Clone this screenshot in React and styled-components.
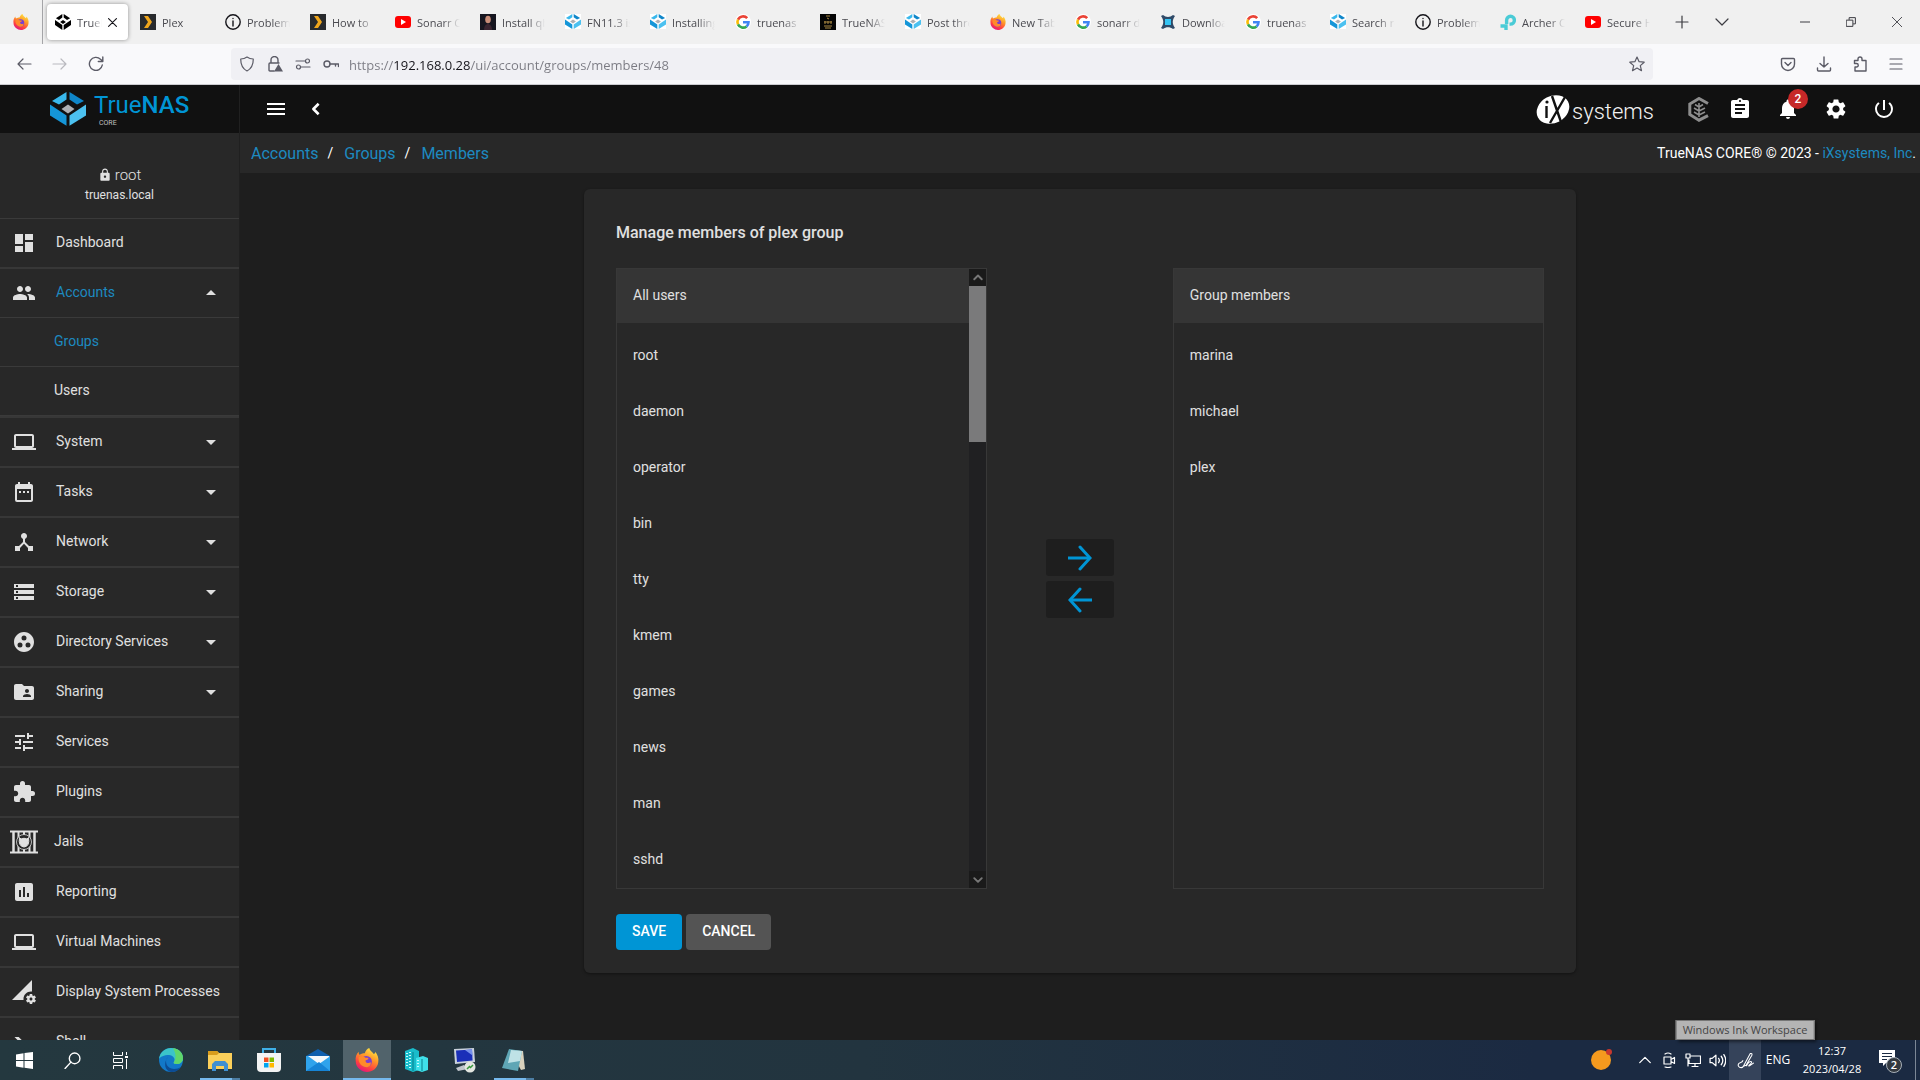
import React from "react";
import styled, { createGlobalStyle, css } from "styled-components";
import {
  MdDashboard, MdPeople, MdLaptop, MdDateRange, MdDeviceHub, MdStorage, MdGroupWork,
  MdFolderShared, MdTune, MdExtension, MdAssessment, MdPermDataSetting, MdMenu,
  MdAssignment, MdNotifications, MdSettings, MdPowerSettingsNew, MdLock,
  MdArrowDropDown, MdArrowDropUp,
} from "react-icons/md";

const ui = '"Open Sans", "Noto Sans", sans-serif';
const app = 'Roboto, "Liberation Sans", sans-serif';
const blue = "#0095d5";
const crumbBlue = "#1d8ac0";

const GlobalStyle = createGlobalStyle`
  * { box-sizing: border-box; }
  body { margin: 0; background: #1e1e1e; font-family: ${app}; overflow: hidden; }
  button { border: 0; padding: 0; background: none; color: inherit; font: inherit; cursor: pointer; }
  a { color: inherit; text-decoration: none; }
  ul { list-style: none; margin: 0; padding: 0; }
  svg { display: block; flex: none; }
`;

const Screen = styled.div`
  display: flex;
  flex-direction: column;
  height: 100vh;
`;

/* ---------- browser ---------- */

const TabStrip = styled.div`
  display: flex;
  align-items: center;
  height: 44px;
  background: #f0f0f0;
  color: #15141a;
  font: 11px ${ui};
`;
const PinnedTab = styled.button`
  display: flex;
  align-items: center;
  justify-content: center;
  width: 43px;
  height: 44px;
  border-right: 1px solid #a5a5a8;
`;
const Tabs = styled.div`
  display: flex;
  gap: 4px;
  padding: 0 4px;
`;
const Tab = styled.button`
  display: flex;
  align-items: center;
  gap: 6px;
  width: 81px;
  height: 36px;
  padding: 0 8px;
  border-radius: 4px;
  color: #4a4a50;
  ${(p) => p.$active && css`
    padding-right: 11px;
    background: #fff;
    box-shadow: 0 0 4px rgba(0, 0, 0, 0.4);
  `}
`;
const TabLabel = styled.span`
  flex: 1;
  overflow: hidden;
  text-align: left;
  white-space: nowrap;
  mask-image: linear-gradient(to right, #000 60%, transparent);
`;
const StripButton = styled.button`
  display: flex;
  align-items: center;
  justify-content: center;
  width: ${(p) => p.$w || 40}px;
  height: 44px;
  color: #3c3c42;
`;
const Spacer = styled.div`
  flex: 1;
`;
const NavBar = styled.div`
  display: flex;
  align-items: center;
  height: 41px;
  padding: 0 6px;
  background: #f9f9fb;
  border-bottom: 1px solid #ccccd0;
  color: #5b5b66;
`;
const NavButton = styled.button`
  display: flex;
  align-items: center;
  justify-content: center;
  width: 36px;
  height: 32px;
  opacity: ${(p) => (p.disabled ? 0.4 : 1)};
`;
const UrlBar = styled.form`
  display: flex;
  align-items: center;
  flex: 1;
  height: 32px;
  margin: 0 117px;
  padding: 0 2px;
  background: #f0f0f4;
  border-radius: 4px;
`;
const UrlIcon = styled.button`
  display: flex;
  align-items: center;
  justify-content: center;
  width: 28px;
  height: 28px;
`;
const UrlInput = styled.input`
  flex: 1;
  border: 0;
  padding: 2px 4px 0;
  outline: 0;
  font: 13px ${ui};
  color: transparent;
  background: linear-gradient(to right, #7a7a82 49px, #15141a 49px, #15141a 125px, #7a7a82 125px);
  background-clip: text;
`;

/* ---------- TrueNAS shell ---------- */

const Shell = styled.div`
  display: flex;
  flex: 1;
  min-height: 0;
  color: #e0e0e0;
`;
const Sidebar = styled.aside`
  display: flex;
  flex-direction: column;
  width: 240px;
  overflow: hidden;
  background: #282828;
  border-right: 1px solid #202020;
`;
const LogoBar = styled.a`
  display: flex;
  align-items: center;
  gap: 8px;
  flex: none;
  height: 48px;
  padding-left: 50px;
  background: #111;
`;
const Wordmark = styled.span`
  display: flex;
  flex-direction: column;
  color: ${blue};
  font-size: 24px;
  line-height: 28px;
  b { font-weight: 500; }
  small { color: #c0c0c0; font-size: 7px; line-height: 8px; padding-left: 5px; }
`;
const UserBox = styled.div`
  display: flex;
  flex-direction: column;
  align-items: center;
  gap: 4px;
  flex: none;
  height: 86px;
  padding-top: 33px;
  border-bottom: 1px solid #3a3a3a;
`;
const UserName = styled.div`
  display: flex;
  align-items: center;
  gap: 3px;
  font-size: 15px;
  font-weight: 300;
  line-height: 18px;
`;
const HostName = styled.div`
  font-size: 12px;
  line-height: 14px;
`;
const NavItem = styled.li`
  border-bottom: 2px solid #373737;
`;
const NavLink = styled.a`
  display: flex;
  align-items: center;
  height: 48px;
  padding: 0 16px 0 ${(p) => (p.$wide ? 10 : 12)}px;
  font-size: 14px;
  color: ${(p) => (p.$active ? crumbBlue : "#e0e0e0")};
  > svg { color: #e0e0e0; }
`;
const NavText = styled.span`
  flex: 1;
  padding: 0 0 2px ${(p) => (p.$wide ? 16 : 20)}px;
  white-space: nowrap;
`;
const SubItem = styled.li`
  border-top: 1px solid #3a3a3a;
  &:last-child { border-bottom: 1px solid #3a3a3a; }
`;
const SubLink = styled.a`
  display: block;
  padding-left: 54px;
  font-size: 14px;
  line-height: 47px;
  height: 48px;
  color: ${(p) => (p.$active ? crumbBlue : "#e0e0e0")};
`;
const Page = styled.div`
  display: flex;
  flex-direction: column;
  flex: 1;
  min-width: 0;
  background: #1e1e1e;
`;
const TopBar = styled.header`
  display: flex;
  align-items: center;
  height: 48px;
  padding: 0 12px 0 16px;
  background: #111;
  color: #fff;
`;
const TopButton = styled.button`
  position: relative;
  display: flex;
  align-items: center;
  justify-content: center;
  width: ${(p) => p.$w || 48}px;
  height: 48px;
`;
const Badge = styled.span`
  position: absolute;
  top: 4px;
  left: 24px;
  width: 20px;
  height: 20px;
  border-radius: 50%;
  background: #c62828;
  color: #fff;
  font-size: 12px;
  font-weight: 500;
  line-height: 20px;
  text-align: center;
`;
const IxLogo = styled.a`
  display: flex;
  align-items: center;
  gap: 2px;
  margin-right: 28px;
  color: #f4f4f4;
  font: 300 22px ${app};
  span { padding-top: 4px; }
`;
const Crumbs = styled.nav`
  display: flex;
  align-items: center;
  height: 40px;
  padding: 0 4px 0 11px;
  background: #282828;
  color: #fff;
  font-size: 16px;
  a { color: ${crumbBlue}; }
`;
const Slash = styled.span`
  padding: 0 11px 0 9px;
  font-size: 14px;
`;
const Copyright = styled.span`
  margin-left: auto;
  font-size: 14px;
`;
const Content = styled.main`
  flex: 1;
  min-height: 0;
  padding: 16px;
`;
const Card = styled.section`
  max-width: 992px;
  margin: 0 auto;
  padding: 32px 32px 23px;
  border-radius: 6px;
  background: #282828;
  box-shadow: 0 1px 3px rgba(0, 0, 0, 0.4);
`;
const Title = styled.h1`
  margin: 0 0 24px;
  font-size: 16px;
  font-weight: 500;
  line-height: 23px;
`;
const DualList = styled.div`
  display: flex;
  height: 621px;
`;
const ListBox = styled.div`
  display: flex;
  width: 40%;
  border: 1px solid #383838;
`;
const ListBody = styled.div`
  flex: 1;
  overflow: hidden;
`;
const ListHeader = styled.h2`
  margin: 0 0 5px;
  padding-left: 16px;
  background: #353535;
  font-size: 14px;
  font-weight: 400;
  line-height: 52px;
  height: 54px;
`;
const User = styled.li`
  padding-left: 16px;
  font-size: 14px;
  line-height: 55px;
  height: 56px;
`;
const ScrollBar = styled.div`
  display: flex;
  flex-direction: column;
  width: 17px;
  background: #202022;
`;
const ScrollButton = styled.button`
  display: flex;
  align-items: center;
  justify-content: center;
  height: 17px;
  background: #1a1a1a;
`;
const ScrollTrack = styled.div`
  flex: 1;
`;
const Thumb = styled.div`
  height: 156px;
  background: #7a7a7b;
`;
const Movers = styled.div`
  display: flex;
  flex-direction: column;
  align-items: center;
  justify-content: center;
  gap: 5px;
  flex: 1;
`;
const MoveButton = styled.button`
  display: flex;
  align-items: center;
  justify-content: center;
  width: 68px;
  height: 37px;
  border-radius: 3px;
  background: #1e1e1e;
  color: ${blue};
`;
const Actions = styled.div`
  display: flex;
  gap: 4px;
  margin-top: 25px;
`;
const ActionButton = styled.button`
  height: 36px;
  padding: 0 16px 2px;
  border-radius: 4px;
  font-size: 14px;
  font-weight: 500;
  color: #fff;
  background: ${(p) => (p.$primary ? blue : "#545454")};
`;

/* ---------- taskbar ---------- */

const TaskBar = styled.footer`
  display: flex;
  height: 40px;
  background: linear-gradient(to right, #24383f, #22343f 45%, #1b2a42 80%);
  color: #fff;
  font: 12px ${ui};
`;
const SystemButtons = styled.div`
  display: flex;
  margin-right: 3px;
`;
const Pinned = styled.div`
  display: flex;
  gap: 1px;
`;
const TaskButton = styled.button`
  position: relative;
  display: flex;
  align-items: center;
  justify-content: center;
  width: 48px;
  height: 40px;
  background: ${(p) => (p.$active ? "#51636b" : "none")};
`;
const Underline = styled.span`
  position: absolute;
  left: ${(p) => (p.$full ? 0 : 4)}px;
  right: ${(p) => (p.$full ? 0 : 4)}px;
  bottom: 0;
  height: 2px;
  background: ${(p) => (p.$full ? "#76b9ed" : "linear-gradient(to right, #76b9ed 32px, #4d7ea3 32px)")};
`;
const Tray = styled.div`
  display: flex;
  margin-left: auto;
  padding-right: 4px;
`;
const TrayItem = styled.button`
  position: relative;
  display: flex;
  align-items: center;
  justify-content: center;
  width: ${(p) => p.$w || 24}px;
  height: 40px;
  background: ${(p) => (p.$hover ? "#35435a" : "none")};
  line-height: 18px;
  font-size: ${(p) => (p.$small ? 11 : 12)}px;
`;
const DesktopEdge = styled.div`
  width: 1px;
  background: #7c8796;
`;
const Tooltip = styled.span`
  position: absolute;
  bottom: 40px;
  left: 50%;
  transform: translateX(-50%);
  padding: 0 6px;
  border: 1px solid #767676;
  background: #b4b4b4;
  color: #454545;
  font-size: 11px;
  line-height: 18px;
  white-space: nowrap;
  box-shadow: 2px 2px 3px rgba(0, 0, 0, 0.5);
`;

/* ---------- drawings ---------- */

const Line = ({ size = 16, w = 1.2, children, ...rest }) => (
  <svg width={size} height={size} viewBox="0 0 16 16" fill="none" stroke="currentColor" strokeWidth={w}
    strokeLinecap="round" strokeLinejoin="round" aria-hidden="true" {...rest}>{children}</svg>
);

const Firefox = ({ size = 16 }) => {
  const id = React.useId();
  return (
    <svg width={size} height={size} viewBox="0 0 32 32" aria-hidden="true">
      <defs>
        <linearGradient id={id} x1="0.8" y1="0" x2="0.3" y2="1">
          <stop offset="0" stopColor="#fff04a" /><stop offset="0.4" stopColor="#ff9a28" />
          <stop offset="0.75" stopColor="#ff4040" /><stop offset="1" stopColor="#e01480" />
        </linearGradient>
      </defs>
      <path fill={`url(#${id})`} d="M19 0c1 4 4 5 6 8 2-1 2-2 2-3 3 4 5 8 4 14-1 8-8 13-15 13S1 26 1 18C0 12 2 8 5 5c0 2 0 3 1 4 3-2 5-2 7-2 1-3 3-6 6-7z" />
      <circle cx="15" cy="18" r="7.5" fill="#7a3fd0" />
      <path fill="#ff8a2a" d="M5 12c4-2 7-1 9 1 2 0 4 0 4 1-1 2-4 2-4 3 0 3 4 4 7 2 1 5-4 8-9 6-5-2-8-7-7-13z" />
    </svg>
  );
};
const Cube = ({ size = 16, mono, white }) => (
  <svg width={size} height={size * (mono ? 1 : 0.94)} viewBox="0 0 36 34" preserveAspectRatio="none" aria-hidden="true">
    {white && <rect width="36" height="34" fill="#fff" />}
    <path fill={mono ? "#000" : "#39b8ec"} d="M16.500 0v7.500L9 12.500 2 9z" />
    <path fill={mono ? "#000" : "#0f86c9"} d="M19.500 0v7.500l7.500 5L34 9z" />
    <path fill={mono ? "#000" : "#1596d8"} d="M0 12.500l16.500 11V34L0 23.500z" />
    <path fill={mono ? "#000" : "#4cc1f0"} d="M36 12.500l-16.500 11V34L36 23.500z" />
    <path fill={mono ? "#000" : "#aeb0b4"} d="M18 12.500l6.500 4.500-6.500 4.500-6.500-4.500z" />
  </svg>
);
const Plex = () => (
  <svg width="16" height="16" viewBox="0 0 16 16" aria-hidden="true">
    <rect width="16" height="16" fill="#282a2d" /><path fill="#f0a61c" d="M4 2h4l4 6-4 6H4l4-6z" />
  </svg>
);
const Info = () => <Line w="1.4" stroke="#15141a"><circle cx="8" cy="8" r="7.2" /><path d="M8 7v5M8 4.4v.2" /></Line>;
const YouTube = () => (
  <svg width="16" height="16" viewBox="0 0 16 16" aria-hidden="true">
    <rect y="2" width="16" height="12" rx="3" fill="#f00" /><path d="M6 5l5 3-5 3z" fill="#fff" />
  </svg>
);
const Portrait = () => (
  <svg width="16" height="16" viewBox="0 0 16 16" aria-hidden="true">
    <rect width="16" height="16" fill="#16151f" /><ellipse cx="8" cy="5.5" rx="2.8" ry="3.8" fill="#c98d78" />
    <path d="M4 16c0-4 2-6 4-6s4 2 4 6z" fill="#3a2430" />
  </svg>
);
const Google = () => (
  <svg width="16" height="16" viewBox="0 0 16 16" fill="none" strokeWidth="2.6" aria-hidden="true">
    <circle cx="8" cy="8" r="8" fill="#fff" />
    <path stroke="#ea4335" d="M12.2 4.2A5.6 5.6 0 0 0 3 5.6" /><path stroke="#fbbc05" d="M3 5.6a5.6 5.6 0 0 0 0 4.8" />
    <path stroke="#34a853" d="M3 10.4a5.6 5.6 0 0 0 8.6 2" /><path stroke="#4285f4" d="M11.6 12.4A5.6 5.6 0 0 0 13.5 8.2H8" />
  </svg>
);
const Badger = () => (
  <svg width="16" height="16" viewBox="0 0 16 16" aria-hidden="true">
    <rect width="16" height="16" fill="#050505" />
    <path d="M6 2h4M7 4l2 1M4 8h8M5 7v3m3-3v3m3-3v3M4 12h8M5 14h6" stroke="#a88743" fill="none" />
  </svg>
);
const Sonarr = () => (
  <svg width="16" height="16" viewBox="0 0 16 16" fill="none" aria-hidden="true">
    <path d="M1 2l2-1c3 2.500 7 2.500 10 0l2 1c-3 4-3 8 0 12l-2 1c-3-2.500-7-2.500-10 0l-2-1c3-4 3-8 0-12z" fill="#2f4a68" />
    <rect x="5" y="5" width="6" height="6" fill="#35c5f4" />
  </svg>
);
const TpLink = () => (
  <svg width="16" height="16" viewBox="0 0 16 16" fill="none" stroke="#4acbd6" strokeWidth="3.4" aria-hidden="true">
    <path d="M6.6 10V6.200a3.900 3.900 0 1 1 3.900 3.900H9.500M6 16v-4H.5" />
  </svg>
);
const JailIcon = () => (
  <svg width="28" height="24" viewBox="0 0 28 24" fill="none" stroke="#e0e0e0" aria-hidden="true">
    <path d="M0 1.500h28M0 22.500h28" strokeWidth="2" /><path d="M3.500 2v20M24.500 2v20" strokeWidth="2.500" />
    <path d="M8.500 2v20M19.500 2v20M14 2v20" strokeWidth="2" /><circle cx="14" cy="12" r="7.500" fill="#282828" strokeWidth="0.800" />
    <path d="M9.500 7.500l1.500 1.500q3-1.500 6 0l1.500-1.500q1.500 9-4.500 9.500-6-.500-4.500-9.500z" fill="#e0e0e0" />
  </svg>
);
const Prompt = () => (
  <svg width="24" height="24" viewBox="0 0 24 24" aria-hidden="true">
    <path fill="currentColor" d="M13 19v-3h8v3zM8.500 13L2.500 7h4.200l5.600 5.600-5.600 5.600H2.500z" />
  </svg>
);
const IxMark = () => (
  <svg width="34" height="31" viewBox="0 0 34 31" aria-hidden="true">
    <ellipse cx="17" cy="15.500" rx="17" ry="13.500" transform="rotate(-28 17 15.500)" fill="#fff" />
    <path d="M10.500 12v12M16 2l9 26M29 3L14 29" stroke="#111" strokeWidth="2.400" /><circle cx="11" cy="8" r="1.600" fill="#111" />
  </svg>
);
const Hex = () => (
  <svg width="22" height="25" viewBox="0 0 22 25" fill="none" stroke="#8d8d8d" aria-hidden="true">
    <path d="M20 6.500L11 1.500 1.800 7v10.500L11 23.200l9-4.500" strokeWidth="3" />
    <path d="M11 6v14M11 10L7 7.500M11 10l4-2.500M11 14l-5-3M11 14l6-3M11 18l-5-3M11 18l6-3" strokeWidth="1.600" />
  </svg>
);
const Arrow = ({ left }) => (
  <svg width="24" height="26" viewBox="0 0 24 26" fill="none" stroke="currentColor" strokeWidth="3" aria-hidden="true">
    {left
      ? <><path d="M24 13H2" /><path d="M12 2L2 13l10 11" strokeLinecap="round" /></>
      : <><path d="M0 13h22" /><path d="M12 2l10 11-10 11" strokeLinecap="round" /></>}
  </svg>
);
const Windows = () => (
  <svg width="17" height="17" viewBox="0 0 17 17" fill="#fff" aria-hidden="true">
    <path d="M0 2.400L7.500 1.300V8H0zM8.500 1.100L17 0v8H8.500zM0 9h7.500v6.700L0 14.600zM8.500 9H17v8l-8.500-1.200z" />
  </svg>
);
const TaskView = () => (
  <svg width="17" height="17" viewBox="0 0 17 17" fill="none" stroke="#fff" aria-hidden="true">
    <path d="M1.500 0v3.500h9V0M1.500 17v-3.500h9V17M1.500 6.500h9v4h-9zM14.500 0v3M14.500 7v10" /><path d="M13 5h3" strokeWidth="2" />
  </svg>
);
const Edge = () => (
  <svg width="24" height="24" viewBox="0 0 24 24" aria-hidden="true">
    <circle cx="12" cy="12" r="12" fill="#1278c8" />
    <path d="M0 11C1 4 6 0 12 0c7 0 12 4 12 10 0 4-3 6-6 6-3 0-4-1-3-2 2-3-1-7-5-7C5 7 1 9 0 11z" fill="#3bc4c9" />
    <path d="M14 0c6 1 10 5 10 10 0 4-3 6-6 6-3 0-4-1-3-2 3-5 1-10-1-14z" fill="#5fd66b" />
    <path d="M9 9c-4 3-2 12 6 12 3 0 5-1 7-2-3 4-6 5-10 5C6 23 4 15 9 9z" fill="#0c4c94" />
  </svg>
);
const Explorer = () => (
  <svg width="24" height="22" viewBox="0 0 24 22" aria-hidden="true">
    <path d="M0 2h9l2 2h13v16H0z" fill="#fbd05a" /><path d="M0 2h9l2 2-2 2H0z" fill="#d99d1c" />
    <path d="M4 22v-7l3-3h10l3 3v7h-4v-5H8v5z" fill="#3f8fd0" />
  </svg>
);
const Store = () => (
  <svg width="24" height="24" viewBox="0 0 24 24" aria-hidden="true">
    <path d="M6 6V1h12v5" fill="none" stroke="#3fb0e8" strokeWidth="2" /><path d="M0 5h24v15q0 4-4 4H4q-4 0-4-4z" fill="#f3f3f3" />
    <path fill="#f05022" d="M7 9.500h4.500V14H7z" /><path fill="#7fba00" d="M12.500 9.500H17V14h-4.500z" />
    <path fill="#00a4ef" d="M7 15h4.500v4.500H7z" /><path fill="#ffb900" d="M12.500 15H17v4.500h-4.500z" />
  </svg>
);
const Mail = () => (
  <svg width="24" height="22" viewBox="0 0 24 22" aria-hidden="true">
    <path d="M0 7l12-7 12 7v15H0z" fill="#0f5fae" /><path d="M0 7h24v15H0z" fill="#2fa3ec" />
    <path d="M2 7h21v1L13 15z" fill="#f4f8fb" /><path d="M0 22L13 13l11 9z" fill="#1684d6" />
  </svg>
);
const Servers = () => (
  <svg width="24" height="24" viewBox="0 0 24 24" aria-hidden="true">
    <path d="M1 3l8-3 6 3v19l-6 2-8-3z" fill="#19bccb" /><path d="M12 10l7-2 5 2v12l-6 2-6-2z" fill="#3fe0ea" />
    <path d="M3 5v15M6 4v17M14 12v9" stroke="#c9fbff" strokeWidth="2" strokeDasharray="1 2" /><path d="M9 4v19M18 11v12" stroke="#087f8c" />
  </svg>
);
const Remote = () => (
  <svg width="24" height="25" viewBox="0 0 24 25" aria-hidden="true">
    <path d="M1 1l20-1 1 14-20 2z" fill="#c9d1dc" /><path d="M3 2.500l16-1 .600 11-15.600 1.500z" fill="#1a2fb8" />
    <path d="M12 2l7-.500.600 6z" fill="#7590ec" /><path d="M3 20l8-3 4 4-10 2z" fill="#c0c5cc" />
    <circle cx="17" cy="19" r="5.500" fill="#e3e6e0" /><path d="M14 21l3-3M17 20l3-3" stroke="#38983c" strokeWidth="1.500" />
  </svg>
);
const Notepad = () => (
  <svg width="24" height="22" viewBox="0 0 24 22" aria-hidden="true">
    <path d="M8 1l13 1 2 18-4 1z" fill="#d9d2bd" /><path d="M7 0l13 2-4 20-16-3z" fill="#5fa6b5" /><path d="M9 1l11 1-2 10-12 2z" fill="#bfe2e6" />
  </svg>
);

/* ---------- data ---------- */

const tabs = [
  ["TrueN", <Cube mono />], ["Plex", <Plex />], ["Problem", <Info />], ["How to", <Plex />],
  ["Sonarr C", <YouTube />], ["Install qb", <Portrait />], ["FN11.3 iss", <Cube white />], ["Installing", <Cube white />],
  ["truenas", <Google />], ["TrueNAS", <Badger />], ["Post thre", <Cube white />], ["New Tab", <Firefox />],
  ["sonarr do", <Google />], ["Downloa", <Sonarr />], ["truenas", <Google />], ["Search re", <Cube white />],
  ["Problem", <Info />], ["Archer C", <TpLink />], ["Secure H", <YouTube />],
];
const nav = [
  { label: "Dashboard", icon: <MdDashboard size={24} /> },
  { label: "Accounts", icon: <MdPeople size={24} />, active: true, children: ["Groups", "Users"] },
  { label: "System", icon: <MdLaptop size={24} />, menu: true },
  { label: "Tasks", icon: <MdDateRange size={24} />, menu: true },
  { label: "Network", icon: <MdDeviceHub size={24} />, menu: true },
  { label: "Storage", icon: <MdStorage size={24} />, menu: true },
  { label: "Directory Services", icon: <MdGroupWork size={24} />, menu: true },
  { label: "Sharing", icon: <MdFolderShared size={24} />, menu: true },
  { label: "Services", icon: <MdTune size={24} /> },
  { label: "Plugins", icon: <MdExtension size={24} /> },
  { label: "Jails", icon: <JailIcon />, wide: true },
  { label: "Reporting", icon: <MdAssessment size={24} /> },
  { label: "Virtual Machines", icon: <MdLaptop size={24} /> },
  { label: "Display System Processes", icon: <MdPermDataSetting size={24} /> },
  { label: "Shell", icon: <Prompt /> },
];
const allUsers = ["root", "daemon", "operator", "bin", "tty", "kmem", "games", "news", "man", "sshd"];
const members = ["marina", "michael", "plex"];

const Browser = () => (
  <>
    <TabStrip>
      <PinnedTab aria-label="Firefox"><Firefox /></PinnedTab>
      <Tabs>
        {tabs.map(([label, icon], i) => (
          <Tab key={i} $active={i === 0}>
            {icon}
            <TabLabel>{label}</TabLabel>
            {i === 0 && <Line size={9} w="2" stroke="#15141a"><path d="M1 1l14 14M15 1L1 15" /></Line>}
          </Tab>
        ))}
      </Tabs>
      <StripButton aria-label="New tab"><Line><path d="M8 2v12M2 8h12" /></Line></StripButton>
      <StripButton aria-label="List tabs"><Line><path d="M2 5l6 6 6-6" /></Line></StripButton>
      <Spacer />
      <StripButton $w={46} aria-label="Minimize"><Line size={10} w="1.6"><path d="M0 8h16" /></Line></StripButton>
      <StripButton $w={46} aria-label="Restore"><Line size={10} w="1.6"><path d="M1 5h10v10H1zM5 4V1h10v10h-3" /></Line></StripButton>
      <StripButton $w={46} aria-label="Close"><Line size={10} w="1.400"><path d="M0 0l16 16M16 0L0 16" /></Line></StripButton>
    </TabStrip>
    <NavBar>
      <NavButton aria-label="Back"><Line><path d="M15 8H2M7 3L2 8l5 5" /></Line></NavButton>
      <NavButton aria-label="Forward" disabled><Line><path d="M1 8h13M9 3l5 5-5 5" /></Line></NavButton>
      <NavButton aria-label="Reload"><Line w="1.400"><path d="M14.300 9A6.500 6.500 0 1 1 12.500 3.300L14.500 5M14.800 1v4.500h-4.500" /></Line></NavButton>
      <UrlBar>
        <UrlIcon type="button" aria-label="Tracking protection"><Line><path d="M8 1c2 1.500 4 2 6.300 2 0 6-1.500 9.500-6.300 12C3.200 12.500 1.700 9 1.700 3 4 3 6 2.500 8 1z" /></Line></UrlIcon>
        <UrlIcon type="button" aria-label="Connection not secure">
          <Line w="1.400"><path d="M7 15H3q-1 0-1-1V8q0-1 1-1h9M4 7V4a3.500 3.500 0 0 1 7 0v3" /><path d="M11.500 8L16 15.500H7z" fill="currentColor" stroke="none" /></Line>
        </UrlIcon>
        <UrlIcon type="button" aria-label="Permissions"><Line><circle cx="12.500" cy="5" r="2" /><path d="M1 5h9M6 11h9" /><circle cx="3.500" cy="11" r="2" /></Line></UrlIcon>
        <UrlIcon type="button" aria-label="Saved login"><Line w="1.400"><circle cx="4" cy="8" r="3" /><path d="M7 8h8.500v2.500M12.500 8v2" /></Line></UrlIcon>
        <UrlInput aria-label="Address" defaultValue="https://192.168.0.28/ui/account/groups/members/48" />
        <UrlIcon type="button" aria-label="Bookmark"><Line><path d="M8 1l2.100 4.700 5.100.500-3.900 3.400 1.200 5.100L8 12l-4.500 2.700 1.200-5.100L.800 6.200l5.100-.500z" /></Line></UrlIcon>
      </UrlBar>
      <NavButton aria-label="Pocket"><Line w="1.400"><path d="M2.500 2.500h11q1 0 1 1V8a6.500 6.500 0 0 1-13 0V3.500q0-1 1-1zM5 6.500l3 3 3-3" /></Line></NavButton>
      <NavButton aria-label="Downloads"><Line w="1.400"><path d="M8 1v10M4 7.500L8 11l4-3.500M1.500 12v2q0 1 1 1h11q1 0 1-1v-2" /></Line></NavButton>
      <NavButton aria-label="Extensions"><Line w="1.400"><path d="M6 4.500V3a2 2 0 0 1 4 0v1.500h4V15H3v-4h1.500a1.700 1.700 0 0 0 0-3.500H2.500v-3z" /></Line></NavButton>
      <NavButton aria-label="Menu"><Line><path d="M2 3h12M2 8h12M2 13h12" /></Line></NavButton>
    </NavBar>
  </>
);

const SideNav = () => (
  <Sidebar>
    <LogoBar href="#">
      <Cube size={36} />
      <Wordmark><span>True<b>NAS</b></span><small>CORE</small></Wordmark>
    </LogoBar>
    <UserBox>
      <UserName><MdLock size={14} />root</UserName>
      <HostName>truenas.local</HostName>
    </UserBox>
    <ul>
      {nav.map((n) => (
        <NavItem key={n.label}>
          <NavLink href="#" $active={n.active} $wide={n.wide}>
            {n.icon}
            <NavText $wide={n.wide}>{n.label}</NavText>
            {n.menu && <MdArrowDropDown size={24} />}
            {n.children && <MdArrowDropUp size={24} />}
          </NavLink>
          {n.children && (
            <ul>
              {n.children.map((c, i) => <SubItem key={c}><SubLink href="#" $active={i === 0}>{c}</SubLink></SubItem>)}
            </ul>
          )}
        </NavItem>
      ))}
    </ul>
  </Sidebar>
);

const Members = () => (
  <Card>
    <Title>Manage members of plex group</Title>
    <DualList>
      <ListBox>
        <ListBody>
          <ListHeader>All users</ListHeader>
          <ul>{allUsers.map((u) => <User key={u}>{u}</User>)}</ul>
        </ListBody>
        <ScrollBar>
          <ScrollButton aria-label="Scroll up"><Line size={10} w="3" stroke="#777"><path d="M2 10l6-6 6 6" /></Line></ScrollButton>
          <ScrollTrack><Thumb /></ScrollTrack>
          <ScrollButton aria-label="Scroll down"><Line size={10} w="3" stroke="#777"><path d="M2 5l6 6 6-6" /></Line></ScrollButton>
        </ScrollBar>
      </ListBox>
      <Movers>
        <MoveButton aria-label="Add to group"><Arrow /></MoveButton>
        <MoveButton aria-label="Remove from group"><Arrow left /></MoveButton>
      </Movers>
      <ListBox>
        <ListBody>
          <ListHeader>Group members</ListHeader>
          <ul>{members.map((u) => <User key={u}>{u}</User>)}</ul>
        </ListBody>
      </ListBox>
    </DualList>
    <Actions>
      <ActionButton $primary>SAVE</ActionButton>
      <ActionButton>CANCEL</ActionButton>
    </Actions>
  </Card>
);

const WindowsBar = () => (
  <TaskBar>
    <SystemButtons>
      <TaskButton aria-label="Start"><Windows /></TaskButton>
      <TaskButton aria-label="Search"><Line size={17} w="1.300"><circle cx="10" cy="6" r="5" /><path d="M6.500 9.500L1 15.500" /></Line></TaskButton>
      <TaskButton aria-label="Task view"><TaskView /></TaskButton>
    </SystemButtons>
    <Pinned>
      <TaskButton aria-label="Edge"><Edge /></TaskButton>
      <TaskButton aria-label="File Explorer"><Explorer /><Underline /></TaskButton>
      <TaskButton aria-label="Store"><Store /></TaskButton>
      <TaskButton aria-label="Mail"><Mail /></TaskButton>
      <TaskButton aria-label="Firefox" $active><Firefox size={24} /><Underline $full /></TaskButton>
      <TaskButton aria-label="Server Manager"><Servers /></TaskButton>
      <TaskButton aria-label="Remote Desktop"><Remote /></TaskButton>
      <TaskButton aria-label="Notepad"><Notepad /><Underline /></TaskButton>
    </Pinned>
    <Tray>
      <TrayItem $w={64} aria-label="Weather">
        <svg width="24" height="24" viewBox="0 0 24 24" aria-hidden="true"><circle cx="12" cy="12" r="10" fill="#f59a1e" /><circle cx="20" cy="4" r="3" fill="#c8372d" /></svg>
      </TrayItem>
      <TrayItem aria-label="Show hidden icons"><Line size={14} w="1.500"><path d="M2 11l6-6 6 6" /></Line></TrayItem>
      <TrayItem aria-label="Meet now"><Line size={16}><path d="M3 5h7v7H3zM10 7.500L13.500 5.500v6L10 9.500M4 2q3-2 6 0M4 15q3 1 6 0" /></Line></TrayItem>
      <TrayItem aria-label="Network"><Line size={16}><path d="M6 4h9.500v7.500H4V8M7 14.500h6M10 12v2M1 2h4v4H1zM3 6v8" /></Line></TrayItem>
      <TrayItem aria-label="Volume"><Line size={17}><path d="M1 6h2l3.500-3v10L3 10H1zM9 6q1.500 2 0 4M11.500 4q3 4 0 8M14 2.500q3.500 5.500 0 11" /></Line></TrayItem>
      <TrayItem $w={32} $hover aria-label="Ink">
        <Line size={17} w="1"><path d="M6 13.500L12.500 1.500q2-.500 1.500 1.500L8.500 12.500zM6 13.500c-2 2.500-6 .500-4.500-2.500 1-1.500 4-1 4-3M9 13q2-4 4-4t-1 3 3.500-1.500" /></Line>
        <Tooltip role="tooltip">Windows Ink Workspace</Tooltip>
      </TrayItem>
      <TrayItem $w={34}>ENG</TrayItem>
      <TrayItem $w={74} $small><span>12:37<br />2023/04/28</span></TrayItem>
      <TrayItem $w={46} aria-label="Notifications">
        <svg width="30" height="26" viewBox="0 0 30 26" aria-hidden="true">
          <path d="M2 3h16v13H9l-3 3v-3H2z" fill="#fff" /><path d="M5 6.500h10M5 9.500h10M5 12.500h5" stroke="#1b2a42" />
          <circle cx="17" cy="18" r="7.500" fill="#333940" stroke="#a8b0b8" />
          <text x="17" y="22" fill="#fff" fontFamily="Open Sans" fontSize="11" fontWeight="600" textAnchor="middle">2</text>
        </svg>
      </TrayItem>
      <DesktopEdge />
    </Tray>
  </TaskBar>
);

export default function App() {
  return (
    <Screen>
      <GlobalStyle />
      <Browser />
      <Shell>
        <SideNav />
        <Page>
          <TopBar>
            <TopButton $w={40} aria-label="Toggle menu"><MdMenu size={24} /></TopButton>
            <TopButton $w={40} aria-label="Collapse"><Line size={14} w="3" strokeLinecap="butt"><path d="M11 2L5 8l6 6" /></Line></TopButton>
            <Spacer />
            <IxLogo href="#"><IxMark /><span>systems</span></IxLogo>
            <TopButton $w={34} aria-label="TrueCommand"><Hex /></TopButton>
            <TopButton aria-label="Tasks"><MdAssignment size={24} /></TopButton>
            <TopButton aria-label="Alerts"><MdNotifications size={24} /><Badge>2</Badge></TopButton>
            <TopButton aria-label="Settings"><MdSettings size={24} /></TopButton>
            <TopButton aria-label="Power"><MdPowerSettingsNew size={24} /></TopButton>
          </TopBar>
          <Crumbs>
            <a href="#">Accounts</a><Slash>/</Slash>
            <a href="#">Groups</a><Slash>/</Slash>
            <a href="#">Members</a>
            <Copyright>TrueNAS CORE® © 2023 - <a href="#">iXsystems, Inc</a>.</Copyright>
          </Crumbs>
          <Content><Members /></Content>
        </Page>
      </Shell>
      <WindowsBar />
    </Screen>
  );
}
